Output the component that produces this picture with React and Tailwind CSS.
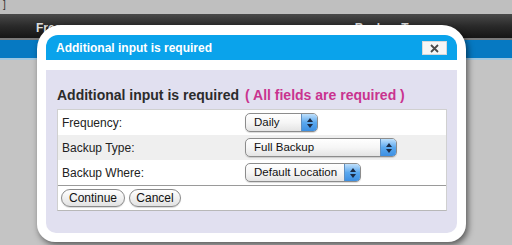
import React from 'react'

function Select({ label, width }) {
  return (
    <div
      className="flex h-[19px] rounded-[5px] border border-[#8c8c8c] bg-gradient-to-b from-white via-[#f6f6f6] to-[#e4e4e4] shadow-[0_1px_1px_rgba(0,0,0,0.15)] overflow-hidden"
      style={{ width }}
    >
      <div className="flex-1 pl-[8px] text-[11.5px] leading-[17px] text-[#111]">{label}</div>
      <div className="w-[16px] flex flex-col items-center justify-center gap-[2px] bg-gradient-to-b from-[#bfe0fb] via-[#5aa8ee] to-[#3d8fe2] border-l border-[#5f8fc0]">
        <svg width="6" height="4" viewBox="0 0 6 4"><path d="M3 0 L6 4 L0 4 Z" fill="#1b2a44" /></svg>
        <svg width="6" height="4" viewBox="0 0 6 4"><path d="M0 0 L6 0 L3 4 Z" fill="#1b2a44" /></svg>
      </div>
    </div>
  )
}

function PillButton({ children, width }) {
  return (
    <button
      className="h-[18px] rounded-full border border-[#8a8a8a] bg-gradient-to-b from-white to-[#e2e2e2] text-[12px] leading-[16px] text-[#111] shadow-[0_1px_1px_rgba(0,0,0,0.15)]"
      style={{ width }}
    >
      {children}
    </button>
  )
}

const rows = [
  { label: 'Frequency:', value: 'Daily', width: 73, bg: 'bg-white' },
  { label: 'Backup Type:', value: 'Full Backup', width: 152, bg: 'bg-[#efefef]' },
  { label: 'Backup Where:', value: 'Default Location', width: 116, bg: 'bg-white' },
]

export default function App() {
  return (
    <div
      className="relative w-[512px] h-[245px] overflow-hidden bg-[#c4c4c4]"
      style={{ fontFamily: '"Liberation Sans", Arial, sans-serif' }}
    >
      <div className="h-[14px] bg-[#bfbfbf] pl-[3px] text-[10px] leading-[10px] text-[#333]">]</div>
      <div className="h-[24px] bg-gradient-to-b from-[#4a4a4a] via-[#2a2a2a] to-[#151515] flex items-start pt-[8px] text-[12px] leading-[12px] font-bold text-[#dedede]">
        <span className="ml-[36px]">Frequency</span>
        <span className="ml-[258px]">Backup Type</span>
      </div>
      <div className="h-[2px] bg-[#7a7a7a]" />
      <div className="h-[18px] bg-[#0679c2]" />
      <div className="h-[2px] bg-[#9fc6df]" />

      <div className="absolute left-[37px] top-[25px] w-[429px] h-[217px] bg-white rounded-t-[24px] rounded-b-[18px] pt-[10px] px-[9px] pb-[9px] shadow-[2px_3px_6px_rgba(0,0,0,0.55)] flex flex-col">
        <div className="h-[25px] bg-[#0aa3eb] rounded-t-[12px] flex items-center justify-between pl-[10px] pr-[10px]">
          <span className="text-[12px] font-bold text-white">Additional input is required</span>
          <div className="w-[25px] h-[14px] mt-[1px] bg-[#f6f6f6] border border-[#d8d8d8] flex items-center justify-center">
            <svg width="9" height="9" viewBox="0 0 9 9">
              <path d="M1 1 L8 8 M8 1 L1 8" stroke="#4a4a4a" strokeWidth="1.8" />
            </svg>
          </div>
        </div>
        <div className="mt-[10px] flex-1 bg-[#e1e0f0] rounded-b-[10px] pt-[16px] pl-[11px] pr-[10px]">
          <div className="h-[18px] flex items-center text-[14px] font-bold">
            <span className="text-[#2b2b2b]">Additional input is required</span>
            <span className="ml-[6px] text-[#c9338f]">( All fields are required )</span>
          </div>
          <div className="mt-[5px] bg-white border-t border-x border-[#d0d0d0] border-b-[#b8b8b8] border-b">
            {rows.map((r) => (
              <div key={r.label} className={`h-[25px] flex items-center ${r.bg}`}>
                <div className="w-[187px] pl-[4px] text-[12px] text-[#222]">{r.label}</div>
                <Select label={r.value} width={r.width} />
              </div>
            ))}
            <div className="h-[25px] border-t border-[#9a9a9a] flex items-center gap-[4px] pl-[3px]">
              <PillButton width={64}>Continue</PillButton>
              <PillButton width={52}>Cancel</PillButton>
            </div>
          </div>
        </div>
      </div>
    </div>
  )
}
